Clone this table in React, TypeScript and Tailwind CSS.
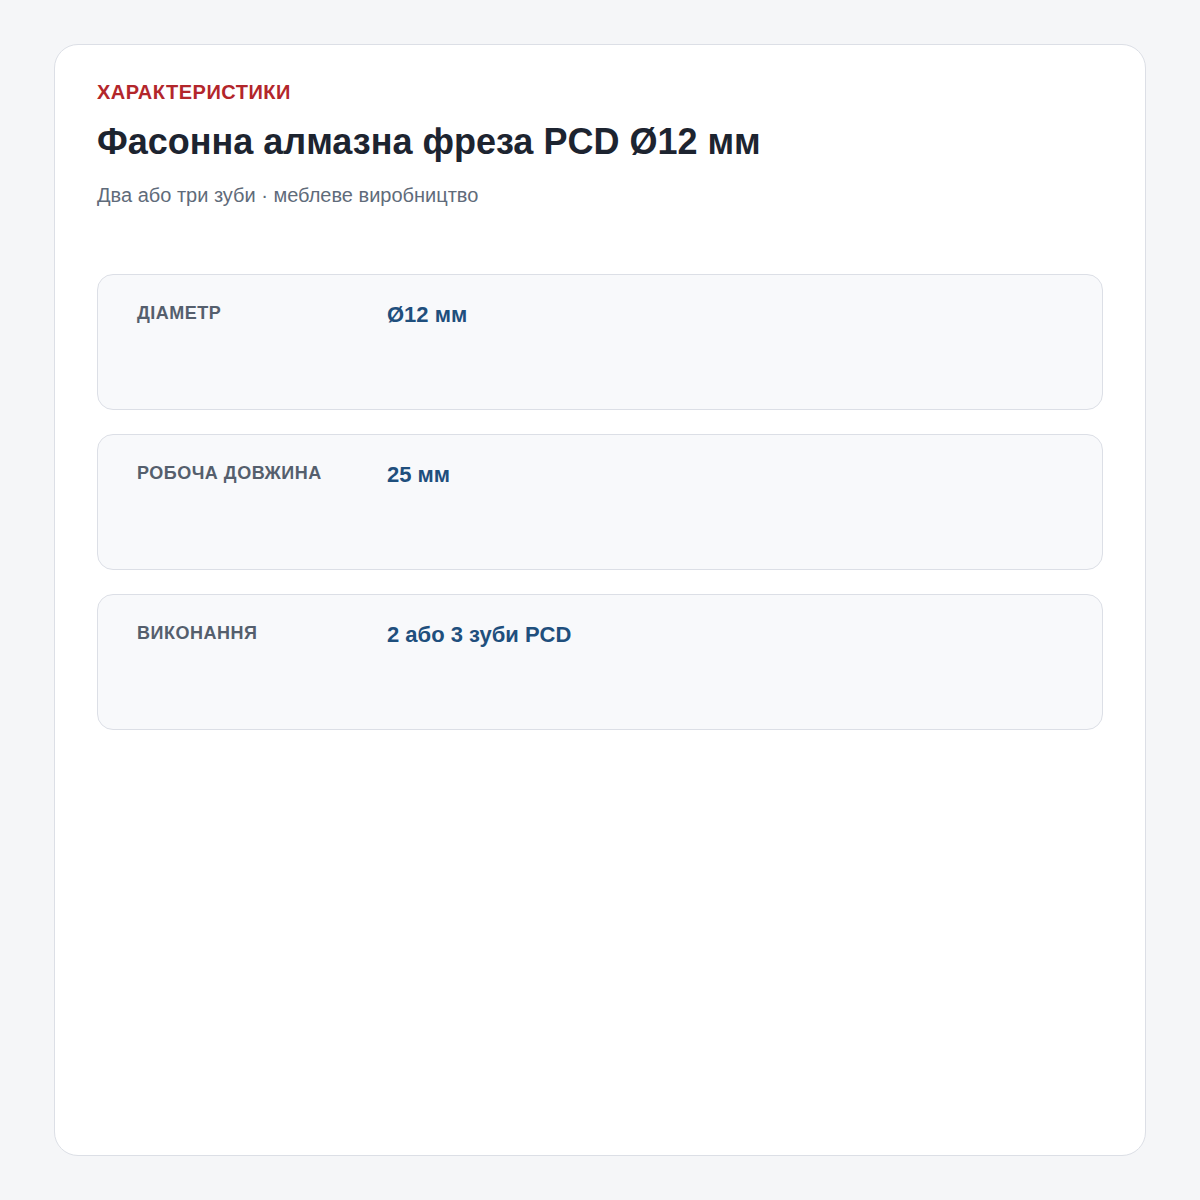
import React from "react";

const rows = [
  { label: "Діаметр", value: "Ø12 мм" },
  { label: "Робоча довжина", value: "25 мм" },
  { label: "Виконання", value: "2 або 3 зуби PCD" },
];

export default function App() {
  return (
    <div
      className="min-h-[1200px] w-[1200px] bg-[#f5f6f8] flex justify-center py-[44px]"
      style={{ fontFamily: '"Liberation Sans", Arial, sans-serif' }}
    >
      <div className="w-[1092px] h-[1112px] bg-white border border-[#dcdfe6] rounded-[24px] px-[42px] pt-[35px]">
        <div className="text-[20px] leading-[24px] font-bold uppercase tracking-[0.5px] text-[#b3262b]">
          Характеристики
        </div>
        <h1 className="mt-[18px] text-[36px] leading-[40px] font-bold text-[#1d2430]">
          Фасонна алмазна фреза PCD Ø12 мм
        </h1>
        <p className="mt-[19px] text-[20px] leading-[28px] text-[#5f6b7a]">
          Два або три зуби · меблеве виробництво
        </p>
        <div className="mt-[65px] flex flex-col gap-[24px]">
          {rows.map((r) => (
            <div
              key={r.label}
              className="h-[136px] bg-[#f8f9fb] border border-[#dcdfe6] rounded-[16px] px-[39px] pt-[26px] flex items-start"
            >
              <div className="w-[250px] text-[18px] leading-[24px] font-bold uppercase tracking-[0.5px] text-[#555f6d]">
                {r.label}
              </div>
              <div className="text-[22px] leading-[28px] font-bold text-[#1f4f7d]">
                {r.value}
              </div>
            </div>
          ))}
        </div>
      </div>
    </div>
  );
}
